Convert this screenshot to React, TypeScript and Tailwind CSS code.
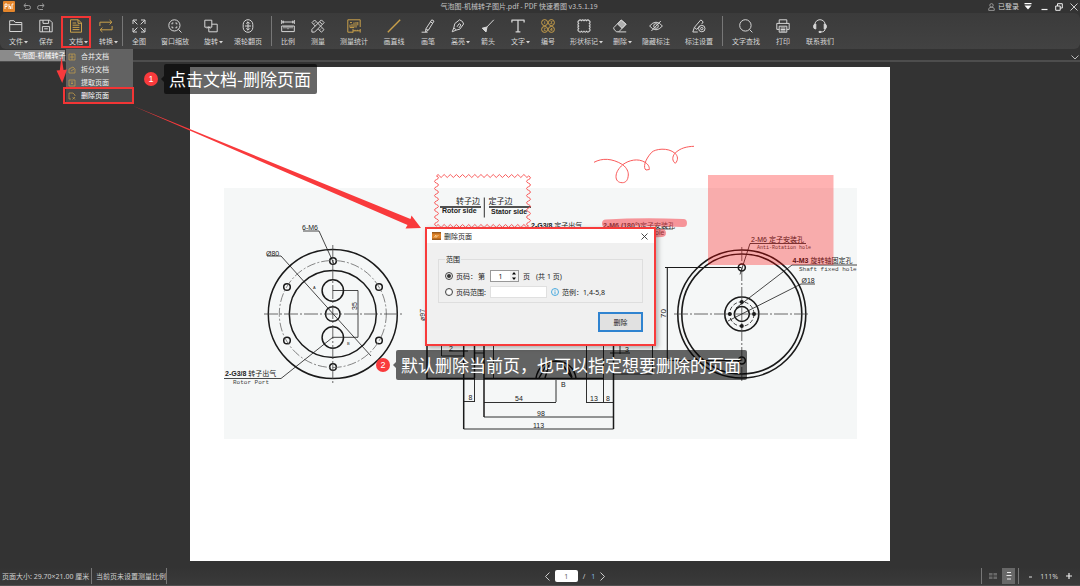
import React, { useState } from "react";
import type { ReactNode } from "react";

const GOLD = "#c9a04a";

type Tool = {
  label: string;
  icon: ReactNode;
  width: string;
  caret?: boolean;
  gold?: boolean;
};

const W2 = "w-[30px]";
const W3 = "w-[38px]";
const W4 = "w-[42px]";
const W4E = "w-[44px]";

const groups: Tool[][] = [
  [
    { label: "文件", width: W2, caret: true, icon: <path d="M.7 12.5V1.7h4.2l1.4 1.8h6.5v9zM.7 5.6h12.1" /> },
    { label: "保存", width: W2, icon: <path d="M.8 3V12.8h12.4V3.6L10.8 1.2H.8zM4 1.2v3.2h5.6V1.2M3.4 12.8V7.6h7.2v5.2M5.2 9.8h3.6" /> },
    { label: "文档", width: W2, caret: true, gold: true, icon: <path d="M1.5.8h7.8l3.2 3.2v9.2h-11zM9 .8V4.3h3.5M3.6 4h3.6M3.6 6.2h6.8M3.6 8.4h6.8M3.6 10.6h6.8" /> },
    { label: "转换", width: W2, caret: true, gold: true, icon: <path d="M.9 7V3.2h11.6M10.6 1l2.3 2.2-2.3 2.2M13.1 7v3.8H1.5M3.4 8.6L1.1 10.8 3.4 13" /> },
  ],
  [
    { label: "全图", width: W2, icon: <path d="M1 5V1h4M1.2 1.2l4.2 4.2M9 1h4v4M12.8 1.2L8.6 5.4M1 9v4h4M1.2 12.8l4.2-4.2M13 9v4H9M12.8 12.8L8.6 8.6" /> },
    { label: "窗口缩放", width: W4, icon: (<><circle cx="6.4" cy="6.4" r="5.6" /><path d="M10.5 10.5l3 3M4 5.4V4h1.4M7.4 4h1.4v1.4M8.8 7.4v1.4H7.4M5.4 8.8H4V7.4" /></>) },
    { label: "旋转", width: W2, caret: true, icon: <path d="M.8 1.2h7v7h-7zM7.8 5.2h5.4v7.6H4.8V8.2M3 9.5l1.8-1.8 1.6 1.8" /> },
    { label: "滚轮翻页", width: W4E, icon: (<><rect x="2.2" y=".7" width="9.6" height="12.6" rx="4.8" /><path d="M7 3v8M5.2 4.6L7 2.8l1.8 1.8M5.2 9.4L7 11.2l1.8-1.8M4 7h6" /></>) },
  ],
  [
    { label: "比例", width: W2, icon: <path d="M.7 1v4M13.3 1v4M1 3h12M3 1.8L1.6 3 3 4.2M11 1.8L12.4 3 11 4.2M.7 7h12.6v5.6H.7zM3 7v2.4M5 7v2.4M7 7v3.2M9 7v2.4M11 7v2.4" /> },
    { label: "测量", width: W2, icon: <path d="M10.4.9l2.7 2.7L3.6 13.1.9 13.1.9 10.4zM1 3.6L3.6 1l9.4 9.6-2.6 2.6-3-3M4.4 7.2L1 3.6M3.2 4.6l1-1M10 9.6l-1 1M8.6 2.8l2.6 2.6" /> },
    { label: "测量统计", width: W4, gold: true, icon: <path d="M6 13.2H.8V.8h12.4V8M3 3.6h2M3 5.6v3M5 5v3.6M7 3.4v5.2M9 3v5.6M10.8 3v3.4M3 8.6h4M6 10v3.6M13.2 10v3.6M6 11.8h7.2M8 10.8v1M10.4 10.8v1" /> },
    { label: "画直线", width: W3, gold: true, icon: <path d="M.8 13.2L13.2.8" strokeWidth="1.4" /> },
    { label: "画笔", width: W2, icon: <path d="M10.8.8l2.2 1.3-5.6 9-2.9 1.7.4-3zM.6 13.2h6M9.4 2.8l2.2 1.4M5 10l2.2 1.2" /> },
    { label: "高亮", width: W2, caret: true, icon: <path d="M8.600.8q3.800 1.400 4 4.200L8.800 10.200 5.400 11 2.800 8.800l1-4.200zM2.800 8.800L1.200 12.800l4.200-1.800M6 7.800l2.200-3.200 1.800 1.400-2.200 3" /> },
    { label: "箭头", width: W2, icon: (<><path d="M12.8.8L4 10" /><path d="M1.2 9.2L5 13l1-5z" fill="currentColor" /></>) },
    { label: "文字", width: W2, caret: true, icon: <path d="M.9 3.6V1.2h12.2v2.4M7 1.2v11.6M4.6 12.8h4.8" strokeWidth="1.3" /> },
    { label: "编号", width: W2, gold: true, icon: (<><circle cx="3.600" cy="3.600" r="3" /><circle cx="10.400" cy="3.600" r="3" /><circle cx="3.600" cy="10.400" r="3" /><circle cx="10.400" cy="10.400" r="3" /><path d="M3.700 2.200v2.800M9.600 2.600h1.600l-1.600 2h1.800M2.800 9.200h1.600l-1 1.200 1 1.200H2.800M10.800 11.800V9L9.400 11h2" strokeWidth=".7" /></>) },
    { label: "形状标记", width: W4, caret: true, icon: <path d="M1.800 1.800q1.300-1.800 2.600 0 1.300-1.800 2.600 0 1.300-1.800 2.600 0 1.300-1.800 2.600 0 1.800 1.300 0 2.600 1.800 1.300 0 2.600 1.800 1.300 0 2.600 1.800 1.300 0 2.600-1.300 1.800-2.600 0-1.300 1.800-2.600 0-1.300 1.800-2.600 0-1.300 1.800-2.600 0-1.800-1.300 0-2.600-1.800-1.300 0-2.600-1.800-1.300 0-2.600-1.800-1.300 0-2.600z" strokeWidth="1.100" /> },
    { label: "删除", width: W2, caret: true, icon: (<><path d="M.8 8.600L8.200 1l4.900 4.200-7.300 7.600H3.400L.8 10zM5.600 12.900h7.600" /><path d="M8.200 1l4.900 4.200-4 4.200-4.600-4.500z" fill="currentColor" fillOpacity=".75" /></>) },
    { label: "隐藏标注", width: W4, icon: (<><path d="M.6 7q6.400-7.600 12.800 0-6.400 7.600-12.800 0zM11.800 2L2.400 12" /><circle cx="7" cy="7" r="2.300" /></>) },
    { label: "标注设置", width: W4E, icon: (<><path d="M.8 13L2.400 8.400 8.800.9l2.400 2-1.600 2.300M.8 13h5M2.400 8.400l2.400 2 3-3.600" /><circle cx="9.800" cy="9.600" r="3.200" /><circle cx="9.800" cy="9.600" r="1.200" /></>) },
  ],
  [
    { label: "文字查找", width: W4E, icon: (<><circle cx="6.400" cy="6.400" r="5.700" /><path d="M10.500 10.500l2.900 2.900" /></>) },
    { label: "打印", width: W2, icon: <path d="M3.200 4.400V.8h7.600v3.600M3.200 10.400H.8v-6h12.400v6h-2.400M3.200 7.200h7.600v6H3.200zM4.600 9h4.800M4.600 10.500h4.800M4.600 12h4.800" /> },
    { label: "联系我们", width: W4E, icon: (<><path d="M1.800 7.500V5.900a5.200 5.200 0 0 1 10.400 0v3.500q0 3.600-4.600 3.600" /><path d="M2.800 5v5Q.5 10 .5 7.500T2.800 5zM11.200 5v5q2.300 0 2.300-2.500T11.200 5zM6 12.400h2v1H6z" fill="currentColor" /></>) },
  ],
];

const menuItems = [
  { label: "合并文档", d: "M1 1h6v6H1zM4 1v6M2 4h4" },
  { label: "拆分文档", d: "M1 3l4-2 2 2v4H1zM3 5l3-2" },
  { label: "提取页面", d: "M1 1h6v6H1zM4 2v3M3 4l1 1 1-1" },
  { label: "删除页面", d: "M3 7H1V1h4l2 2v1M4.500 5l2.500 2.500M7 5L4.500 7.500" },
];

function Separator() {
  return <span className="mx-px h-[30px] w-px shrink-0 bg-[#777777]" />;
}

function DocumentMenu() {
  return (
    <div className="absolute left-[5px] top-full z-20 w-[67px] bg-[#626262] pt-px pb-0.5">
      {menuItems.map((item, i) => (
        <button
          key={item.label}
          className={
            i === 3
              ? "flex h-[13px] w-full items-center gap-[5px] bg-[#484848] pl-0.5 text-[7px] leading-none text-white"
              : "flex h-[13px] w-full items-center gap-[5px] pl-0.5 text-[7px] leading-none text-[#f0f0f0]"
          }
        >
          <svg viewBox="0 0 8 8" className="size-2 shrink-0" fill="none" stroke={GOLD} strokeWidth=".7">
            <path d={item.d} />
          </svg>
          <span className="whitespace-nowrap">{item.label}</span>
        </button>
      ))}
      <span className="pointer-events-none absolute -left-[3px] bottom-0 h-[17px] w-[71px] border-2 border-[#f23535]" />
    </div>
  );
}

function ToolButton({ tool }: { tool: Tool }) {
  return (
    <div className={`relative flex h-full shrink-0 justify-center ${tool.width}`}>
      <button className="flex flex-col items-center gap-1 pt-1.5 text-[#d6d6d6]">
        <svg
          viewBox="0 0 14 14"
          className="size-3.5"
          fill="none"
          stroke={tool.gold ? GOLD : "currentColor"}
          strokeWidth="1"
          strokeLinejoin="round"
        >
          {tool.icon}
        </svg>
        <span className="relative whitespace-nowrap text-[7px] leading-[9px]">
          {tool.label}
          {tool.caret && (
            <svg viewBox="0 0 4 3" className="absolute left-full top-[4px] ml-px h-[3px] w-1">
              <path d="M0 0h4L2 2.500z" fill="currentColor" />
            </svg>
          )}
        </span>
      </button>
      {tool.label === "文档" && (
        <>
          <span className="pointer-events-none absolute inset-x-0 bottom-px top-[3px] border-2 border-[#f23535]" />
          <DocumentMenu />
        </>
      )}
    </div>
  );
}

function TitleBar() {
  return (
    <div className="grid h-[13px] grid-cols-[1fr_auto_1fr] items-center text-[7px] leading-none text-[#c4c4c4]">
      <div className="flex items-center gap-2 pl-[3px]">
        <svg viewBox="0 0 12 11" className="h-[11px] w-3">
          <rect width="12" height="11" rx="1" fill="#e6862b" />
          <path d="M2 3v5M2 3h2v2.500H2M6 3v5M6 5.500h1.500V8M9 8V3h1.500" stroke="#fff" strokeWidth=".9" fill="none" />
        </svg>
        <svg viewBox="0 0 22 8" className="h-2 w-[22px]" fill="none" stroke="#999" strokeWidth="1">
          <path d="M3 .500L.8 2.500 3 4.500M1 2.500h4.500q2 0 2 2t-2 2H2M19 .500l2.200 2L19 4.500M21 2.500h-4.500q-2 0-2 2t2 2H20" />
        </svg>
      </div>
      <h1 className="whitespace-nowrap pr-[42px]">气泡图-机械转子图片.pdf - PDF 快速看图 v3.5.1.19</h1>
      <div className="flex items-center justify-end gap-[5px] pr-0.5">
        <button className="flex items-center gap-[3px] whitespace-nowrap text-[#d6d6d6]">
          <svg viewBox="0 0 7 8" className="h-2 w-[7px]" fill="none" stroke="#aaa" strokeWidth=".8">
            <circle cx="3.500" cy="2.300" r="1.700" />
            <path d="M.7 7.400V6q0-1.700 2.800-1.700T6.300 6v1.400z" />
          </svg>
          已登录
        </button>
        <button aria-label="选项">
          <svg viewBox="0 0 8 7" className="h-[7px] w-2" fill="#fff">
            <path d="M.500 0h7v1.200h-7zM.500 2.500h7L4 6.500z" />
          </svg>
        </button>
        <div className="ml-1 flex gap-[7px]">
          <button aria-label="最小化">
            <svg viewBox="0 0 7 8" className="h-2 w-[7px]"><path d="M.500 6.500h6" stroke="#eee" strokeWidth="1.200" /></svg>
          </button>
          <button aria-label="还原">
            <svg viewBox="0 0 8 8" className="size-2" fill="none" stroke="#eee"><path d="M.700 3h4.500v4.300H.700zM2.500 3V.700h4.800v4.300H5.200" /></svg>
          </button>
          <button aria-label="关闭">
            <svg viewBox="0 0 8 8" className="size-2"><path d="M.500.500l7 7M7.500.500l-7 7" stroke="#ddd" strokeWidth=".9" /></svg>
          </button>
        </div>
      </div>
    </div>
  );
}

function Header() {
  return (
    <header className="relative z-10">
      <TitleBar />
      <nav className="flex h-9 items-center rounded-md bg-linear-to-b from-[#3b3b3b] to-[#424242] pl-px">
        {groups.map((group, i) => (
          <React.Fragment key={i}>
            {i > 0 && <Separator />}
            {group.map((tool) => (
              <ToolButton key={tool.label} tool={tool} />
            ))}
          </React.Fragment>
        ))}
      </nav>
      <div className="flex h-[13px] items-start justify-between border-b-2 border-[#4d4d4d] pt-px">
        <button className="h-[11px] whitespace-nowrap bg-[#8b8b8b] pl-3.5 text-left text-[7px] leading-[11px] text-white">
          气泡图-机械转子
        </button>
        <button aria-label="标签列表" className="pr-px pt-[5px]">
          <svg viewBox="0 0 8 5" className="h-[5px] w-2"><path d="M.500.500L4 4 7.500.500" fill="none" stroke="#bbb" /></svg>
        </button>
      </div>
    </header>
  );
}

function cloudPath(x0: number, y0: number, x1: number, y1: number) {
  const nx = 15;
  const ny = 7;
  const dx = (x1 - x0) / nx / 2;
  const dy = (y1 - y0) / ny / 2;
  let d = `M${x0} ${y0}`;
  for (let i = 0; i < nx; i++) d += `q${dx / 2} -3 ${dx} 0q${dx / 2} 3 ${dx} 0`;
  for (let i = 0; i < ny; i++) d += `q4 ${dy / 2} 0 ${dy}q-4 ${dy / 2} 0 ${dy}`;
  for (let i = 0; i < nx; i++) d += `q${-dx / 2} 3 ${-dx} 0q${-dx / 2} -3 ${-dx} 0`;
  for (let i = 0; i < ny; i++) d += `q-4 ${-dy / 2} 0 ${-dy}q4 ${-dy / 2} 0 ${-dy}`;
  return d;
}

const boltHoles = [
  [333, 261],
  [379, 287],
  [379, 340.5],
  [333, 367],
  [287, 340.5],
  [287, 287],
];

function Drawing() {
  return (
    <svg viewBox="190 67 700 494" className="block h-auto w-full" role="img" aria-label="机械转子图">
      <rect x="224" y="188" width="633" height="251" fill="#f5f7f7" />

      <g fill="none" stroke="#1a1a1a" strokeWidth=".8">
        <g strokeWidth="1.500">
          <circle cx="332.800" cy="314" r="64.500" />
          <circle cx="332.800" cy="314" r="43.500" />
          <circle cx="332.800" cy="314" r="7.300" />
          <circle cx="332.800" cy="290.500" r="10.700" />
          <circle cx="332.800" cy="337.500" r="10.700" />
          {boltHoles.map(([x, y]) => (
            <circle key={`${x}-${y}`} cx={x} cy={y} r="3.300" />
          ))}
        </g>
        <circle cx="332.800" cy="314" r="53.500" stroke="#666" strokeDasharray="9 2 2 2" />
        <path d="M264 314h138M332.800 245v138" stroke="#444" strokeDasharray="14 2 2 2" />
        <path d="M303 231h16l15 33M267 256h14l90 100M332.800 290.500H358v46.800H332.800L281 378.500H224" />
      </g>

      <g fill="none" stroke="#1a1a1a">
        <path d="M440 207h41M489 207h42" strokeWidth="1.500" />
        <path d="M484.300 197.500v20" strokeWidth=".9" />
        <path d="M427 340v38.500h48M484 378.500h120M463.700 340v89M474.500 340v38M484 340v77M613.500 340v89" strokeWidth="1.500" />
        <path d="M474.500 378v23.500M493.500 340v38M441.500 340v16h22M449 351h19M474 353h10M556 380v22M586.500 340v62M603.500 340v62M620 340v14M610 353h20M613 374h39.500V340M464 401.500h11M484 402.500h72M586 402.500h28M484 417h129.500M463.700 429h149.800" strokeWidth=".9" />
        <path d="M536 378q3-16 20-17 17 1 20 17M539 378l8-14M545 378l4-13M567 365l5 12M562 364l10 14" strokeWidth="1.500" />
        <path d="M532 229h50M603 229h70" strokeWidth=".7" />
      </g>

      <g fill="none" stroke="#1a1a1a" strokeWidth=".8">
        <g strokeWidth="1.600">
          <circle cx="741.800" cy="314" r="64" />
          <circle cx="741.800" cy="314" r="60" />
          <circle cx="741.800" cy="314" r="17" />
          <circle cx="741.800" cy="314" r="7.500" />
          <circle cx="741.800" cy="267.500" r="3.500" />
          <circle cx="741.800" cy="360.500" r="3.500" />
        </g>
        <circle cx="741.800" cy="314" r="12.200" strokeDasharray="4 2" />
        <path d="M674 314h136M741.800 247v135" stroke="#444" strokeDasharray="14 2 2 2" />
        <path d="M665 267.500h76M667.300 267.500v93h74" strokeWidth="1.100" />
        <path d="M806 243.500h-56l-10 31M857 265h-65l-56 43M815 284h-14l-73 37" />
      </g>
      <g fill="#1a1a1a">
        <circle cx="741.800" cy="302" r="2" />
        <circle cx="741.800" cy="326" r="2" />
        <circle cx="729.800" cy="314" r="2" />
        <circle cx="754" cy="314" r="2" />
      </g>

      <g fill="#222" className="font-['Liberation_Sans','Noto_Sans_CJK_SC',sans-serif] text-[7px]">
        <text x="302" y="230">6-M6</text>
        <text x="266" y="255.500">Ø80</text>
        <text x="313" y="289" className="text-[4px]">A</text>
        <text x="347" y="345" className="text-[4px]">B</text>
        <text transform="translate(357 310) rotate(-90)">35</text>
        <text x="225" y="376"><tspan className="font-bold">2-G3/8</tspan> 转子出气</text>
        <text x="456" y="204" className="text-[8px]">转子边</text>
        <text x="488.500" y="204" className="text-[8px]">定子边</text>
        <text x="442" y="213" className="font-bold">Rotor side</text>
        <text x="491" y="213.500" className="font-bold">Stator side</text>
        <text x="531" y="228"><tspan className="font-bold">2-G3/8</tspan> 定子出气</text>
        <text x="603" y="227.500"><tspan className="font-bold">2-M6 (180°)</tspan>定子安装孔</text>
        <text x="655" y="235">ole</text>
        <text transform="translate(425 321) rotate(-90)">ø97</text>
        <text transform="translate(666 318) rotate(-90)" className="text-[8px]">70</text>
        <text x="449" y="351">2</text>
        <text x="625" y="352">3</text>
        <text x="468.500" y="400">8</text>
        <text x="515" y="401">54</text>
        <text x="590" y="401">13</text>
        <text x="606" y="401">8</text>
        <text x="537" y="416">98</text>
        <text x="533" y="428">113</text>
        <text x="561" y="386.500">B</text>
        <text x="751" y="242">2-M6 定子安装孔</text>
        <text x="792.500" y="263"><tspan className="font-bold">4-M3</tspan> 旋转轴固定孔</text>
        <text x="801.500" y="283">Ø18</text>
      </g>
      <g fill="#444" className="font-['Liberation_Mono',monospace] text-[6px]">
        <text x="233" y="384">Rotor Port</text>
        <text x="757" y="249" className="text-[5px]">Anti-Rotation hole</text>
        <text x="799" y="270.500">Shaft fixed hole</text>
      </g>

      <rect x="708" y="175" width="125.500" height="90" fill="#ff0000" fillOpacity=".3" />
      <g fill="none" stroke="#f5444c" strokeOpacity=".55" strokeLinecap="round" strokeWidth="8">
        <path d="M606 223.500q36-2 77-.5M650 233.500l12-.5" />
      </g>
      <g fill="none" stroke="#fa5a5a">
        <path d={cloudPath(436.5, 176, 528.5, 226)} />
        <path d="M594 162.300C602 158 612 158 622.700 164.700C627 168 628.500 172 628.300 175C628 180 626 182.700 622.300 182.700C618 182.700 616 180 616 176.700C616 172 619 168 622.700 164.700C629 160 638 158 645 162.300C648.500 164.500 649.500 167 649.300 169.500L646 170C643 168 644.500 160 651.700 152.300C655 149 668 147 675 153.300C678 156 678.500 160 675.300 163.300C672 161 672 156.500 675 153.300C680 148 687 146.500 694 146.300" />
      </g>
    </svg>
  );
}

function DeleteDialog() {
  const [mode, setMode] = useState("page");
  return (
    <section
      role="dialog"
      aria-labelledby="dialog-title"
      className="absolute left-[235px] top-[160px] flex w-[231px] flex-col border-2 border-[#f83b3b] bg-[#f0f0f0] font-['Noto_Sans','Noto_Sans_CJK_SC',sans-serif] text-[7px] leading-none text-[#222] shadow-[2px_2px_5px_rgba(0,0,0,0.3)]"
    >
      <div className="flex h-[14px] items-center bg-white pl-[5px] pr-1.5">
        <svg viewBox="0 0 9 8" className="mr-[3px] h-2 w-[9px]">
          <rect width="9" height="8" fill="#dc8026" />
          <path d="M0 0h9v1.500H0zM0 6.500h9V8H0z" fill="#9b5a1c" />
          <path d="M2 5.500L4 3v2.500L6.500 3" stroke="#fbd9a5" fill="none" strokeWidth=".8" />
        </svg>
        <h2 id="dialog-title" className="flex-1">删除页面</h2>
        <button aria-label="关闭">
          <svg viewBox="0 0 7 7" className="size-[7px]"><path d="M.500.500l6 6M6.500.500l-6 6" stroke="#333" strokeWidth=".9" /></svg>
        </button>
      </div>
      <div className="px-[11px] pb-3 pt-[13px]">
        <fieldset className="flex flex-col gap-1 border border-[#dedede] px-1.5 pb-1 pt-[7px]">
          <legend className="px-px">范围</legend>
          <div className="flex h-3 items-center">
            <label className="flex items-center gap-[3px]">
              <input
                type="radio"
                name="range"
                checked={mode === "page"}
                onChange={() => setMode("page")}
                className="size-2 appearance-none rounded-full border border-[#444] bg-white bg-clip-content p-px checked:bg-[#333]"
              />
              页码：
            </label>
            <label htmlFor="page-number" className="ml-px mr-[5px]">第</label>
            <span className="mr-1 flex h-3 w-[29px] items-center border border-[#999] bg-white">
              <input id="page-number" type="text" defaultValue="1" className="w-full min-w-0 flex-1 text-center leading-none outline-none" />
              <span className="flex h-full w-2 flex-col bg-[#f0f0f0]">
                <button aria-label="增加" className="flex flex-1 items-center justify-center">
                  <svg viewBox="0 0 4 3" className="h-[3px] w-1"><path d="M0 2.500h4L2 0z" /></svg>
                </button>
                <button aria-label="减少" className="flex flex-1 items-center justify-center">
                  <svg viewBox="0 0 4 3" className="h-[3px] w-1"><path d="M0 .500h4L2 3z" /></svg>
                </button>
              </span>
            </span>
            <span>页</span>
            <span className="ml-1.5">(共 1 页)</span>
          </div>
          <div className="flex h-3 items-center">
            <label className="flex w-[45px] items-center gap-[3px] whitespace-nowrap">
              <input
                type="radio"
                name="range"
                checked={mode === "range"}
                onChange={() => setMode("range")}
                className="size-2 appearance-none rounded-full border border-[#444] bg-white bg-clip-content p-px checked:bg-[#333]"
              />
              页码范围:
            </label>
            <input type="text" aria-label="页码范围" className="mr-1 h-3 w-[57px] border border-[#e0e0e0] bg-white outline-none" />
            <svg viewBox="0 0 8 8" className="mr-[3px] size-2" fill="none" stroke="#3ba4dc" strokeWidth=".9">
              <circle cx="4" cy="4" r="3.500" />
              <path d="M4 1.800v.9M4 3.400v2.800" />
            </svg>
            <span>范例：1,4-5,8</span>
          </div>
        </fieldset>
        <button className="ml-auto mt-[9px] block h-5 w-[45px] border-2 border-[#2f83d0] bg-[#e1e1e1]">删除</button>
      </div>
    </section>
  );
}

function Callout({ step, text }: { step: string; text: string }) {
  return (
    <div className="flex items-center gap-1.5">
      <span className="flex size-3.5 items-center justify-center rounded-full bg-[#f93a3c] font-['Liberation_Sans',sans-serif] text-[9px] leading-none text-white">
        {step}
      </span>
      <div className="relative">
        <svg viewBox="0 0 3 6" className="absolute right-full top-3 h-1.5 w-[3px]">
          <path d="M3 0v6L0 3z" fill="#000" fillOpacity=".6" />
        </svg>
        <p className="whitespace-nowrap rounded-xs bg-black/60 pl-[5px] pr-1.5 text-[17px] leading-[30px] text-white">{text}</p>
      </div>
    </div>
  );
}

function StatusBar() {
  return (
    <footer className="grid h-[19px] grid-cols-[1fr_auto_1fr] items-center border-b border-[#505050] bg-linear-to-b from-[#333333] to-[#3a3a3a] font-['Noto_Sans','Noto_Sans_CJK_SC',sans-serif] text-[7px] leading-none text-[#cfcfcf]">
      <div className="flex items-center whitespace-nowrap pl-0.5">
        <span className="w-[89px]">页面大小: 29.70×21.00 厘米</span>
        <span className="mr-1 h-4 w-px bg-[#777]" />
        <span className="w-[70px]">当前页未设置测量比例</span>
        <span className="h-4 w-px bg-[#777]" />
      </div>
      <div className="flex items-center gap-[5px] pl-[70px]">
        <button aria-label="上一页">
          <svg viewBox="0 0 5 9" className="h-[9px] w-[5px]"><path d="M4.500.500l-4 4 4 4" fill="none" stroke="#ccc" /></svg>
        </button>
        <input aria-label="页码" defaultValue="1" className="h-3 w-[23px] rounded-xs bg-white text-center text-[7px] text-[#666] outline-none" />
        <span>/</span>
        <span className="ml-px text-[#7fb2e0]">1</span>
        <button aria-label="下一页">
          <svg viewBox="0 0 5 9" className="h-[9px] w-[5px]"><path d="M.500.500l4 4-4 4" fill="none" stroke="#ccc" /></svg>
        </button>
      </div>
      <div className="flex items-center justify-end pr-2">
        <span className="mr-[7px] h-4 w-px bg-[#777]" />
        <button aria-label="双页视图" className="mr-[5px]">
          <svg viewBox="0 0 8 8" className="size-2" fill="#686868"><path d="M0 1h3.500v2.500H0zM4.500 1H8v2.500H4.500zM0 4.500h3.500V7H0zM4.500 4.500H8V7H4.500z" /></svg>
        </button>
        <button aria-label="单页视图" className="mr-[3px] flex h-4 w-[13px] items-center justify-center bg-[#686868]">
          <svg viewBox="0 0 6 8" className="h-2 w-1.5"><path d="M1 .500h4M.500 3.500h5M1 7h4" stroke="#e8e8e8" fill="none" /></svg>
        </button>
        <span className="mr-2.5 h-4 w-px bg-[#777]" />
        <button aria-label="缩小" className="mr-2">
          <svg viewBox="0 0 3 5" className="h-[5px] w-[3px]"><path d="M0 3h3" stroke="#ddd" /></svg>
        </button>
        <span className="mr-2">111%</span>
        <button aria-label="放大">
          <svg viewBox="0 0 6 6" className="size-1.5"><path d="M0 3h6M3 0v6" stroke="#eee" strokeWidth="1.200" /></svg>
        </button>
      </div>
    </footer>
  );
}

export default function App() {
  return (
    <div className="relative flex min-h-screen flex-col overflow-hidden bg-[#333333] font-['Noto_Sans_CJK_SC',sans-serif]">
      <Header />
      <main className="flex flex-1 justify-center pb-1.5 pt-[5px]">
        <article className="relative w-full max-w-[700px] self-start bg-white">
          <Drawing />
          <DeleteDialog />
        </article>
      </main>
      <StatusBar />

      <div className="absolute left-36 top-16">
        <Callout step="1" text="点击文档-删除页面" />
      </div>
      <div className="absolute left-[376px] top-[350px]">
        <Callout step="2" text="默认删除当前页，也可以指定想要删除的页面" />
      </div>
      <svg viewBox="0 0 440 240" className="pointer-events-none absolute left-0 top-0 z-20 h-[240px] w-[440px]" fill="#f93a3c">
        <path d="M61.500 56L63.500 70l3.500-.500-4.800 13.500L56.500 70.500l3.300-.200z" />
        <path d="M132 105.500L410.500 219l1-3.500L421 228l-15.500.500 2-3.500z" />
      </svg>
    </div>
  );
}
